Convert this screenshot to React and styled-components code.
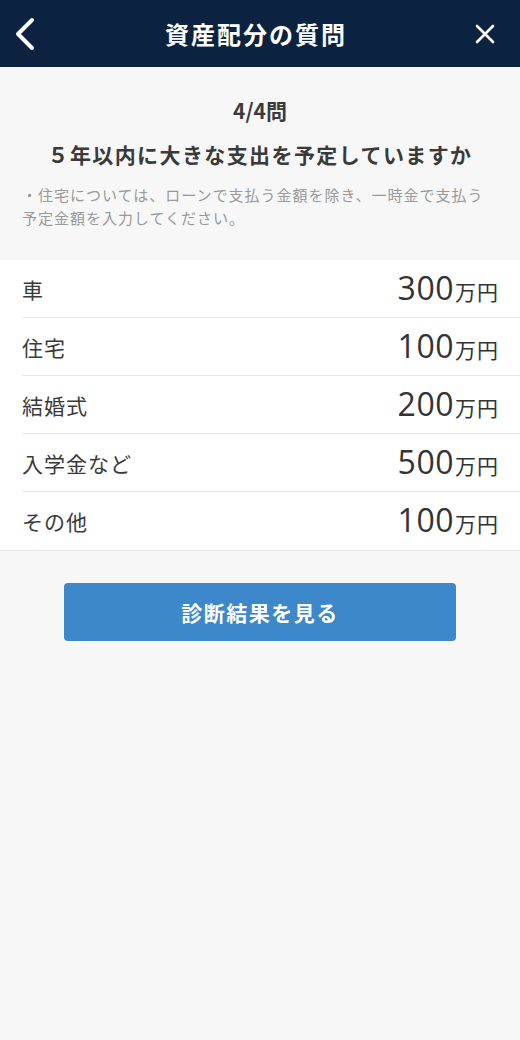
import React from 'react'
import styled, { createGlobalStyle } from 'styled-components'

const GlobalStyle = createGlobalStyle`
    html, body {
        margin: 0;
        padding: 0;
        background: #f7f7f7;
    }
    body {
        font-family: "Noto Sans CJK JP", "Noto Sans", sans-serif;
        color: #333;
    }
`

const items = [
    { label: '車', amount: 300 },
    { label: '住宅', amount: 100 },
    { label: '結婚式', amount: 200 },
    { label: '入学金など', amount: 500 },
    { label: 'その他', amount: 100 },
]

const App = () => {
    return (
        <Page>
            <GlobalStyle />
            <Header>
                <IconButton aria-label="back">
                    <svg width="26" height="34" viewBox="0 0 26 34">
                        <path d="M20 3 L6 17 L20 31" fill="none" stroke="#fff" strokeWidth="4" strokeLinecap="round" strokeLinejoin="round" />
                    </svg>
                </IconButton>
                <Title>資産配分の質問</Title>
                <IconButton aria-label="close">
                    <svg width="22" height="22" viewBox="0 0 22 22">
                        <path d="M3 3 L19 19 M19 3 L3 19" fill="none" stroke="#fff" strokeWidth="2.6" strokeLinecap="round" />
                    </svg>
                </IconButton>
            </Header>

            <Intro>
                <Step>4/4問</Step>
                <Question>５年以内に大きな支出を予定していますか</Question>
                <Note>・住宅については、ローンで支払う金額を除き、一時金で支払う予定金額を入力してください。</Note>
            </Intro>

            <List>
                {items.map((item) => (
                    <Row key={item.label}>
                        <Label>{item.label}</Label>
                        <Value>
                            <Amount>{item.amount}</Amount>
                            <Unit>万円</Unit>
                        </Value>
                    </Row>
                ))}
            </List>

            <Actions>
                <SubmitButton>診断結果を見る</SubmitButton>
            </Actions>
        </Page>
    )
}

const Page = styled.div`
    min-height: 1040px;
    background: #f7f7f7;
`

const Header = styled.header`
    height: 67px;
    background: #0b2340;
    display: flex;
    align-items: center;
    justify-content: space-between;
    padding: 0 20px 0 8px;
    box-sizing: border-box;
`

const IconButton = styled.button`
    background: none;
    border: 0;
    padding: 4px;
    display: flex;
    align-items: center;
    justify-content: center;
    cursor: pointer;
`

const Title = styled.h1`
    margin: 0;
    color: #fff;
    font-size: 24px;
    font-weight: 700;
    letter-spacing: 2px;
`

const Intro = styled.section`
    padding: 26px 22px 31px;
    text-align: center;
`

const Step = styled.div`
    font-size: 21px;
    font-weight: 700;
    color: #3a3a3a;
    line-height: 34px;
`

const Question = styled.h2`
    margin: 10px 0 0;
    font-size: 21px;
    font-weight: 700;
    letter-spacing: 1.4px;
    color: #3a3a3a;
    line-height: 34px;
`

const Note = styled.p`
    margin: 12px 0 0;
    font-size: 15px;
    letter-spacing: 1px;
    line-height: 23px;
    color: #999;
    text-align: left;
`

const List = styled.ul`
    list-style: none;
    margin: 0;
    padding: 0 0 0 22px;
    background: #fff;
    border-bottom: 1px solid #e5e5e5;
`

const Row = styled.li`
    height: 58px;
    display: flex;
    align-items: center;
    justify-content: space-between;
    padding-right: 22px;
    border-bottom: 1px solid #e5e5e5;
    box-sizing: border-box;
    &:last-child {
        border-bottom: 0;
    }
`

const Label = styled.span`
    font-size: 21px;
    letter-spacing: 1px;
    color: #3a3a3a;
`

const Value = styled.span`
    display: flex;
    align-items: baseline;
    color: #333;
`

const Amount = styled.span`
    font-family: "Open Sans", "Noto Sans", sans-serif;
    font-size: 32px;
    line-height: 1;
    letter-spacing: 0.5px;
`

const Unit = styled.span`
    font-size: 21px;
    letter-spacing: 1px;
    margin-left: 1px;
    margin-right: -1px;
`

const Actions = styled.div`
    display: flex;
    justify-content: center;
    padding-top: 32px;
`

const SubmitButton = styled.button`
    width: 392px;
    height: 58px;
    border: 0;
    border-radius: 4px;
    background: #3d87cb;
    color: #fff;
    font-family: "Noto Sans CJK JP", sans-serif;
    font-size: 21px;
    font-weight: 700;
    letter-spacing: 1.5px;
    cursor: pointer;
`

export default App
